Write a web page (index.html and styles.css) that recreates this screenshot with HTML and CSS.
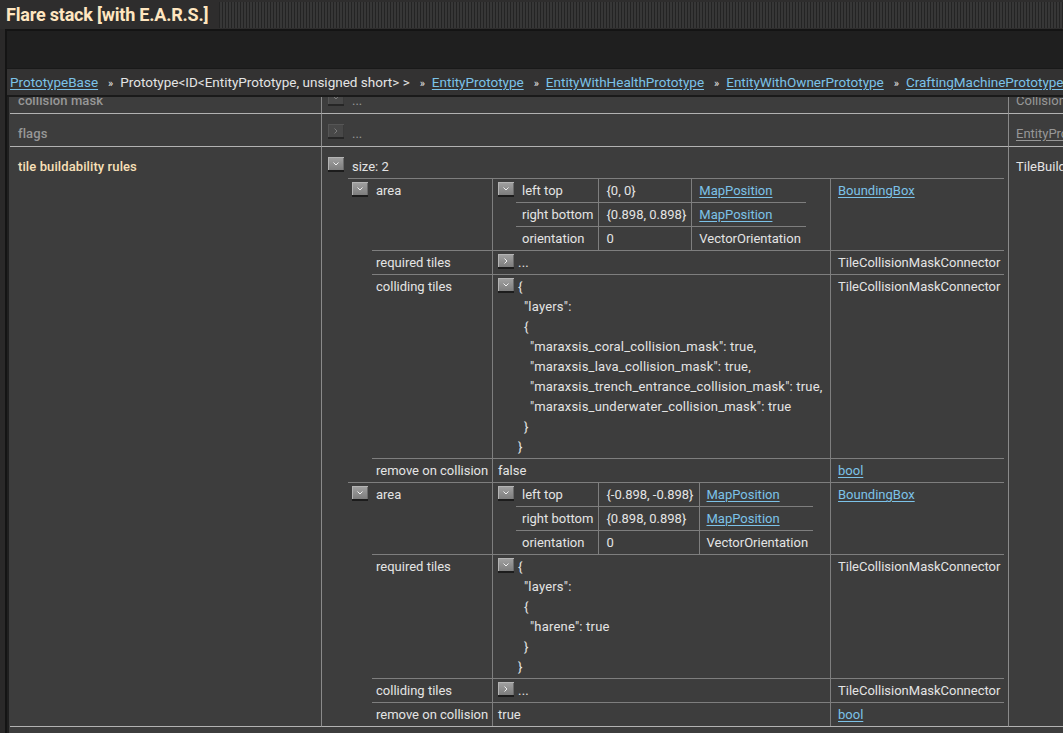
FILE: index.html
```html
<!DOCTYPE html>
<html lang="en">
<head>
    <meta charset="UTF-8">
    <title>Flare stack [with E.A.R.S.]</title>
    <link rel="stylesheet" href="styles.css">
</head>
<body>

    <header class="titlebar">
        <h1>Flare stack [with E.A.R.S.]</h1>
        <div class="drag"></div>
    </header>

    <div class="frame">
        <div class="toolbar"></div>

        <nav class="crumbs">
            <a href="#">PrototypeBase</a><span class="sep">»</span><span>Prototype&lt;ID&lt;EntityPrototype, unsigned short&gt; &gt;</span><span class="sep">»</span><a href="#">EntityPrototype</a><span class="sep">»</span><a href="#">EntityWithHealthPrototype</a><span class="sep">»</span><a href="#">EntityWithOwnerPrototype</a><span class="sep">»</span><a href="#">CraftingMachinePrototype</a>
        </nav>

        <div class="scroll">
            <table class="props">
                <colgroup><col class="c-name"><col class="c-val"><col class="c-type"></colgroup>
                <tr class="dim">
                    <td class="name">collision mask</td>
                    <td class="val"><span class="tog off"><svg viewBox="0 0 6 4"><path d="M0.5 0.5 3 3 5.5 0.5"/></svg></span>...</td>
                    <td class="type">CollisionMaskConnector</td>
                </tr>
                <tr class="dim">
                    <td class="name">flags</td>
                    <td class="val"><span class="tog off"><svg viewBox="0 0 6 6"><path d="M1.5 0.5 4 3 1.5 5.5"/></svg></span>...</td>
                    <td class="type"><a href="#">EntityPrototypeFlags</a></td>
                </tr>
                <tr class="hl">
                    <td class="name">tile buildability rules</td>
                    <td class="val">
                        <span class="tog"><svg viewBox="0 0 6 4"><path d="M0.5 0.5 3 3 5.5 0.5"/></svg></span>size: 2
                        <table class="arr">
                            <tr>
                                <td class="bc"><span class="tog"><svg viewBox="0 0 6 4"><path d="M0.5 0.5 3 3 5.5 0.5"/></svg></span></td>
                                <td>
                                    <table class="obj">
                                        <colgroup><col class="o-name"><col class="o-val"><col class="o-type"></colgroup>
                                        <tr>
                                            <td>area</td>
                                            <td class="v c">
                                                <div class="cell">
                                                    <span class="tog"><svg viewBox="0 0 6 4"><path d="M0.5 0.5 3 3 5.5 0.5"/></svg></span>
                                                    <table class="kv">
                                                        <tr><td>left top</td><td>{0, 0}</td><td><a href="#">MapPosition</a></td></tr>
                                                        <tr><td>right bottom</td><td>{0.898, 0.898}</td><td><a href="#">MapPosition</a></td></tr>
                                                        <tr><td>orientation</td><td>0</td><td>VectorOrientation</td></tr>
                                                    </table>
                                                </div>
                                            </td>
                                            <td class="t"><a href="#">BoundingBox</a></td>
                                        </tr>
                                        <tr>
                                            <td>required tiles</td>
                                            <td class="v c">
                                                <div class="cell">
                                                    <span class="tog"><svg viewBox="0 0 6 6"><path d="M1.5 0.5 4 3 1.5 5.5"/></svg></span>
                                                    <div class="json">...</div>
                                                </div>
                                            </td>
                                            <td class="t">TileCollisionMaskConnector</td>
                                        </tr>
                                        <tr>
                                            <td>colliding tiles</td>
                                            <td class="v c">
                                                <div class="cell">
                                                    <span class="tog"><svg viewBox="0 0 6 4"><path d="M0.5 0.5 3 3 5.5 0.5"/></svg></span>
                                                    <div class="json">
                                                        <div>{</div>
                                                        <div class="l1">"layers":</div>
                                                        <div class="l1">{</div>
                                                        <div class="l2">"maraxsis_coral_collision_mask": true,</div>
                                                        <div class="l2">"maraxsis_lava_collision_mask": true,</div>
                                                        <div class="l2">"maraxsis_trench_entrance_collision_mask": true,</div>
                                                        <div class="l2">"maraxsis_underwater_collision_mask": true</div>
                                                        <div class="l1">}</div>
                                                        <div>}</div>
                                                    </div>
                                                </div>
                                            </td>
                                            <td class="t">TileCollisionMaskConnector</td>
                                        </tr>
                                        <tr>
                                            <td>remove on collision</td>
                                            <td class="v">false</td>
                                            <td class="t"><a href="#">bool</a></td>
                                        </tr>
                                    </table>
                                </td>
                            </tr>
                            <tr>
                                <td class="bc"><span class="tog"><svg viewBox="0 0 6 4"><path d="M0.5 0.5 3 3 5.5 0.5"/></svg></span></td>
                                <td>
                                    <table class="obj">
                                        <colgroup><col class="o-name"><col class="o-val"><col class="o-type"></colgroup>
                                        <tr>
                                            <td>area</td>
                                            <td class="v c">
                                                <div class="cell">
                                                    <span class="tog"><svg viewBox="0 0 6 4"><path d="M0.5 0.5 3 3 5.5 0.5"/></svg></span>
                                                    <table class="kv">
                                                        <tr><td>left top</td><td>{-0.898, -0.898}</td><td><a href="#">MapPosition</a></td></tr>
                                                        <tr><td>right bottom</td><td>{0.898, 0.898}</td><td><a href="#">MapPosition</a></td></tr>
                                                        <tr><td>orientation</td><td>0</td><td>VectorOrientation</td></tr>
                                                    </table>
                                                </div>
                                            </td>
                                            <td class="t"><a href="#">BoundingBox</a></td>
                                        </tr>
                                        <tr>
                                            <td>required tiles</td>
                                            <td class="v c">
                                                <div class="cell">
                                                    <span class="tog"><svg viewBox="0 0 6 4"><path d="M0.5 0.5 3 3 5.5 0.5"/></svg></span>
                                                    <div class="json">
                                                        <div>{</div>
                                                        <div class="l1">"layers":</div>
                                                        <div class="l1">{</div>
                                                        <div class="l2">"harene": true</div>
                                                        <div class="l1">}</div>
                                                        <div>}</div>
                                                    </div>
                                                </div>
                                            </td>
                                            <td class="t">TileCollisionMaskConnector</td>
                                        </tr>
                                        <tr>
                                            <td>colliding tiles</td>
                                            <td class="v c">
                                                <div class="cell">
                                                    <span class="tog"><svg viewBox="0 0 6 6"><path d="M1.5 0.5 4 3 1.5 5.5"/></svg></span>
                                                    <div class="json">...</div>
                                                </div>
                                            </td>
                                            <td class="t">TileCollisionMaskConnector</td>
                                        </tr>
                                        <tr>
                                            <td>remove on collision</td>
                                            <td class="v">true</td>
                                            <td class="t"><a href="#">bool</a></td>
                                        </tr>
                                    </table>
                                </td>
                            </tr>
                        </table>
                    </td>
                    <td class="type">TileBuildabilityRule[]</td>
                </tr>
            </table>
        </div>
    </div>

</body>
</html>
```

FILE: styles.css
```css
/* Window */
body {
    margin: 0;
    height: 733px;
    overflow: hidden;
    background: #2a2929;
    font-family: Roboto, 'Noto Sans', sans-serif;
    font-size: 13px;
    color: #e4e4e4;
}

a {
    color: #7cc2e8;
    text-decoration: underline;
    text-underline-offset: 2px;
}

.titlebar {
    display: flex;
    align-items: center;
    height: 29px;
    padding-left: 6px;
    background: #2e2d2d;
}

.titlebar h1 {
    margin: 0;
    font-size: 18px;
    font-weight: 700;
    letter-spacing: -0.2px;
    color: #ffe6c0;
    white-space: nowrap;
}

.drag {
    flex: 1;
    height: 26px;
    margin-left: 11px;
    background: repeating-linear-gradient(90deg, #242424 0 1px, #373737 1px 3px);
}

.frame {
    display: flex;
    flex-direction: column;
    height: 702px;
    margin-left: 5px;
    border-top: 2px solid #141414;
    border-left: 2px solid #141414;
    background: #1f1f1f;
}

.toolbar {
    height: 37px;
}

/* Breadcrumbs */
.crumbs {
    height: 26px;
    line-height: 26px;
    padding-left: 3px;
    font-size: 13.5px;
    background: #333232;
    border-top: 1px solid #191919;
    border-bottom: 2px solid #1a1a1a;
    white-space: nowrap;
    overflow: hidden;
}

.sep {
    margin: 0 7px 0 10px;
    font-size: 11px;
}

.scroll {
    flex: 1;
    overflow: hidden;
    margin-left: 2px;
    background: #3d3d3d;
}

/* Toggle buttons */
.tog {
    display: inline-flex;
    align-items: center;
    justify-content: center;
    box-sizing: border-box;
    width: 16px;
    height: 15px;
    vertical-align: top;
    background: linear-gradient(#a2a2a2, #7d7d7d);
    border-bottom: 2px solid #1c1c1c;
    box-shadow: inset 1px 1px 0 #b4b4b4, inset -1px 0 0 #6a6a6a;
}

.tog svg {
    width: 6px;
    height: 6px;
    fill: none;
    stroke: #f0f0f0;
    stroke-width: 1;
}

.tog.off {
    background: #484848;
    box-shadow: inset 1px 1px 0 #555, inset -1px 0 0 #3a3a3a;
    border-bottom-color: #262626;
}

.tog.off svg {
    stroke: #7a7a7a;
}

/* Property table */
.props {
    width: 1250px;
    margin: -16px 0 0 1px;
    border-spacing: 0;
    table-layout: fixed;
}

.c-name { width: 311px; }
.c-val { width: 687px; }
.c-type { width: 252px; }

.props > tbody > tr > td {
    box-sizing: border-box;
    padding: 10px 4px 2px 8px;
    line-height: 20px;
    vertical-align: top;
    border-bottom: 1px solid #b2b2b2;
    white-space: nowrap;
    overflow: hidden;
}

.props > tbody > tr > .val {
    padding-left: 6px;
    border-left: 1px solid #8a8a8a;
}

.props > tbody > tr.hl > .val {
    padding-bottom: 0;
}

.props > tbody > tr > .type {
    padding-left: 7px;
    border-left: 1px solid #8a8a8a;
}

.props .val > .tog {
    margin-right: 8px;
}

.name {
    font-weight: 500;
    letter-spacing: 0.1px;
}

.dim .name,
.dim .val,
.dim .type,
.dim a {
    color: #979797;
}

.hl .name {
    color: #f8e0b8;
}

/* Array of rules */
.arr {
    width: 656px;
    margin: 1px 0 0 20px;
    border-spacing: 0;
    table-layout: fixed;
}

.arr > tbody > tr > td {
    padding: 0;
    vertical-align: top;
    border-top: 1px solid #7e7e7e;
}

.arr .bc {
    width: 24px;
}

.arr .bc .tog {
    margin: 3px 0 0 4px;
}

.obj {
    width: 632px;
    border-spacing: 0;
    table-layout: fixed;
}

.o-name { width: 120px; }
.o-val { width: 339px; }
.o-type { width: 173px; }

.obj > tbody > tr > td {
    padding: 2px 4px 1px;
    line-height: 20px;
    vertical-align: top;
    border-bottom: 1px solid #7e7e7e;
    white-space: nowrap;
}

.obj > tbody > tr:last-child > td {
    border-bottom: none;
}

.obj > tbody > tr > .v {
    padding-left: 5px;
    border-left: 1px solid #7e7e7e;
    border-right: 1px solid #7e7e7e;
}

.obj > tbody > tr > .v.c {
    padding: 0;
}

.obj > tbody > tr > .t {
    padding-left: 7px;
}

.cell {
    display: flex;
    align-items: flex-start;
}

.cell > .tog {
    margin: 3px 2px 0 5px;
}

.json {
    padding: 2px 0 1px 2px;
    letter-spacing: 0.2px;
}

.l1 { padding-left: 6px; }
.l2 { padding-left: 12px; }

/* Nested key/value table */
.kv {
    border-spacing: 0;
}

.kv td {
    padding: 2px 5px 1px 6px;
    line-height: 20px;
    border-bottom: 1px solid #7e7e7e;
}

.kv td + td {
    padding-left: 7px;
    border-left: 1px solid #7e7e7e;
}

.kv tr:last-child td {
    border-bottom: none;
}
```
